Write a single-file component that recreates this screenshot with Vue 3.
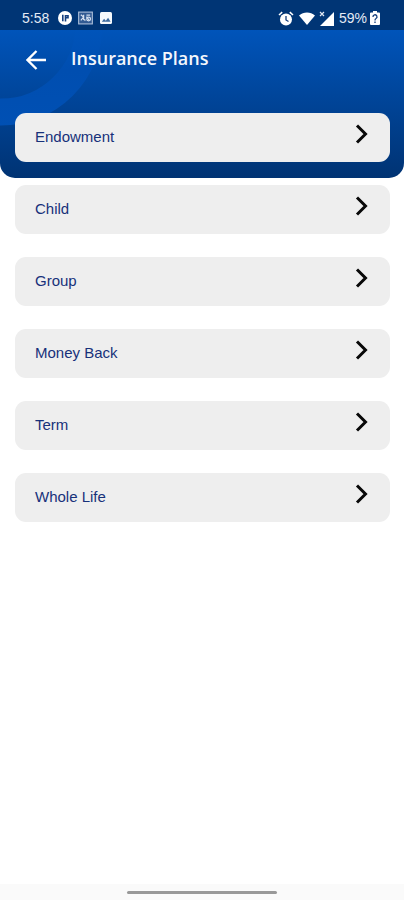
<script setup>
const plans = ['Endowment', 'Child', 'Group', 'Money Back', 'Term', 'Whole Life']
</script>

<template>
  <div class="screen">
    <header class="header">
      <svg class="ring" width="120" height="148" viewBox="0 0 120 148" aria-hidden="true">
        <defs>
          <linearGradient id="ring-fill" gradientUnits="userSpaceOnUse" x1="0" y1="0" x2="0" y2="100">
            <stop offset="0" stop-color="#0054ba" />
            <stop offset=".4" stop-color="#004eb0" />
            <stop offset="1" stop-color="#0050b4" />
          </linearGradient>
        </defs>
        <circle cx="1" cy="-6" r="88" fill="none" stroke="url(#ring-fill)" stroke-width="27" />
      </svg>
      <div class="status">
        <div class="status-group">
          <span class="clock">5:58</span>
          <svg width="14" height="14" viewBox="0 0 14 14" aria-hidden="true">
            <circle cx="7" cy="7" r="7" fill="#fff" />
            <path d="M4.800 3.800v6.500M7.500 10.500V4.800h2.500v2H7.500" fill="none" stroke="#16407f" stroke-width="1.600" />
          </svg>
          <svg width="15" height="14" viewBox="0 0 16 14" aria-hidden="true">
            <rect x=".7" y=".7" width="14.600" height="12.600" fill="#315a93" stroke="#a9bcd8" stroke-width="1.200" />
            <path d="M3 3.500l3 2.500-3 3.500M6 3.500v5l2 1M9 4h4M9 5.500l3 4" fill="none" stroke="#d5e0f0" stroke-width="1.300" />
            <circle cx="11.300" cy="8" r="2" fill="none" stroke="#d5e0f0" stroke-width="1.300" />
          </svg>
          <svg class="photo" width="12" height="12" viewBox="0 0 12 12" aria-hidden="true">
            <rect width="12" height="12" rx="1.500" fill="#f4f8fc" />
            <path d="M1.800 9.800l2.300-3 1.700 2 2.300-3 2.500 4z" fill="#3c6a9f" />
          </svg>
        </div>
        <div class="status-group status-right">
          <svg width="16" height="15" viewBox="0 0 16 15" aria-hidden="true">
            <circle cx="8" cy="8.500" r="6" fill="#fff" />
            <path d="M1 4l3.200-2.800M15 4l-3.200-2.800" stroke="#fff" stroke-width="1.600" />
            <path d="M8 5v4l2.500 1.500" fill="none" stroke="#123c7b" stroke-width="1.300" />
          </svg>
          <svg width="16" height="13" viewBox="0 0 16 13" aria-hidden="true">
            <path d="M0 3.500C4.500-.5 11.500-.5 16 3.500L8 13z" fill="#fff" />
          </svg>
          <svg class="signal" width="15" height="15" viewBox="0 0 15 15" aria-hidden="true">
            <path d="M15 1v14H1z" fill="#fff" />
            <path d="M1 1l4 4M5 1L1 5" stroke="#dfe7f3" stroke-width="1.200" />
          </svg>
          <span class="battery-text">59%</span>
          <svg width="10" height="14" viewBox="0 0 10 14" aria-hidden="true">
            <path d="M3 0h4v1.500h2a1 1 0 0 1 1 1V13a1 1 0 0 1-1 1H1a1 1 0 0 1-1-1V2.500a1 1 0 0 1 1-1h2z" fill="#fff" />
            <path d="M3 6a2 2 0 1 1 3 1.500Q5 8 5 9.500M5 10.500V12" fill="none" stroke="#123c7b" stroke-width="1.300" />
          </svg>
        </div>
      </div>
      <div class="titlebar">
        <button class="back" type="button" aria-label="Back">
          <svg width="20" height="20" viewBox="0 0 20 20" aria-hidden="true">
            <path d="M20 10H2M10.500 1L1.500 10l9 9" fill="none" stroke="#fff" stroke-width="2.300" />
          </svg>
        </button>
        <h1 class="title">Insurance Plans</h1>
      </div>
    </header>

    <main class="plans">
      <button v-for="plan in plans" :key="plan" class="plan" type="button">
        <span>{{ plan }}</span>
        <svg width="14" height="20" viewBox="0 0 14 20" aria-hidden="true">
          <path d="M2 1.500L10.500 10 2 18.500" fill="none" stroke="#080808" stroke-width="3" />
        </svg>
      </button>
    </main>

    <footer class="navbar"><span class="pill"></span></footer>
  </div>
</template>

<style>
body {
  background: #fff;
}
</style>

<style scoped>
.screen {
  display: flex;
  flex-direction: column;
  min-height: 100vh;
  font-family: "Liberation Sans", Arial, sans-serif;
}
.header {
  position: relative;
  padding-bottom: 92px;
  border-radius: 0 0 15px 15px;
  background: linear-gradient(#0054ba 30px, #003373 178px);
  overflow: hidden;
}
.ring {
  position: absolute;
  top: 30px;
  left: 0;
}
.status {
  position: relative;
  display: flex;
  justify-content: space-between;
  align-items: center;
  box-sizing: border-box;
  height: 30px;
  padding: 6px 24px 0 22px;
  background: #003575;
  color: #e4ebf5;
  font-size: 14px;
  line-height: 18px;
}
.status-group {
  display: flex;
  align-items: center;
  gap: 6px;
}
.clock {
  margin-right: 3px;
}
.photo {
  margin-left: 1px;
}
.status-right {
  gap: 5px;
}
.signal {
  margin-left: -1px;
}
.battery-text {
  margin-right: -2px;
}
.titlebar {
  position: relative;
  display: flex;
  align-items: center;
  height: 56px;
  padding-left: 26px;
}
.back {
  display: flex;
  margin: 4px 25px 0 0;
  padding: 0;
  border: 0;
  background: none;
}
.title {
  margin: 0;
  color: #f4f7fc;
  font: 600 18px/26px "Open Sans", "Noto Sans", sans-serif;
}
.plans {
  position: relative;
  display: flex;
  flex: 1;
  flex-direction: column;
  gap: 23px;
  margin-top: -65px;
  padding: 0 14px 24px 15px;
}
.plan {
  display: flex;
  justify-content: space-between;
  align-items: center;
  box-sizing: border-box;
  height: 49px;
  padding: 0 21px 2px 20px;
  border: 0;
  border-radius: 11px;
  background: #eee;
  color: #17317a;
  font: 15px/20px "Liberation Sans", Arial, sans-serif;
}
.plan svg {
  margin-top: -5px;
}
.navbar {
  display: flex;
  justify-content: center;
  align-items: center;
  height: 16px;
  background: #fafafa;
}
.pill {
  width: 37%;
  height: 3px;
  border-radius: 2px;
  background: #999;
}
</style>
